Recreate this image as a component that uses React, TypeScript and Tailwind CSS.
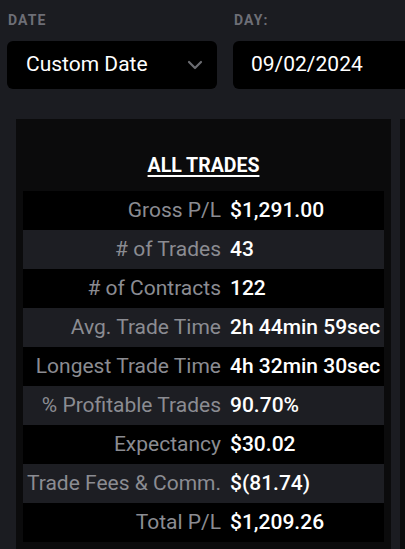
import React from "react";

const rows: [string, string][] = [
  ["Gross P/L", "$1,291.00"],
  ["# of Trades", "43"],
  ["# of Contracts", "122"],
  ["Avg. Trade Time", "2h 44min 59sec"],
  ["Longest Trade Time", "4h 32min 30sec"],
  ["% Profitable Trades", "90.70%"],
  ["Expectancy", "$30.02"],
  ["Trade Fees & Comm.", "$(81.74)"],
  ["Total P/L", "$1,209.26"],
];

export default function App() {
  return (
    <div
      className="w-[405px] h-[549px] overflow-hidden bg-[#1b1c21]"
      style={{ fontFamily: "Roboto, 'Liberation Sans', sans-serif" }}
    >
      <div className="flex gap-[16px] pl-[7px] pt-[12px]">
        <div className="w-[210px] shrink-0">
          <div className="pl-[1px] h-[17px] text-[14px] leading-[17px] font-bold tracking-[0.08em] text-[#6d6e76]">
            DATE
          </div>
          <div className="mt-[12px] h-[48px] bg-black rounded-[6px] flex items-center justify-between pl-[19px] pr-[14px]">
            <span className="text-[21px] text-white">Custom Date</span>
            <svg width="16" height="10" viewBox="0 0 16 10" fill="none">
              <path d="M2 2 L8 8 L14 2" stroke="#6b6c71" strokeWidth="2.2" strokeLinecap="round" strokeLinejoin="round" />
            </svg>
          </div>
        </div>
        <div className="w-[200px] shrink-0">
          <div className="pl-[1px] h-[17px] text-[14px] leading-[17px] font-bold tracking-[0.08em] text-[#6d6e76]">
            DAY:
          </div>
          <div className="mt-[12px] h-[48px] bg-black rounded-[6px] flex items-center pl-[18px]">
            <span className="text-[21px] text-white">09/02/2024</span>
          </div>
        </div>
      </div>

      <div className="flex gap-[9px] mt-[30px] pl-[16px]">
        <div className="w-[375px] shrink-0 h-[460px] bg-[#0b0b0c] px-[7px] pt-[34px]">
          <div className="text-center text-[19.5px] leading-[26px] font-bold text-white underline underline-offset-[3px] decoration-[1.5px]">
            ALL TRADES
          </div>
          <div className="mt-[12px]">
            {rows.map(([label, value], i) => (
              <div
                key={label}
                className={
                  "grid grid-cols-[198px_1fr] gap-[9px] h-[39px] items-center " +
                  (i % 2 === 0 ? "bg-black" : "bg-[#1d1e23]")
                }
              >
                <div className="text-right text-[21px] text-[#8b8c92] whitespace-nowrap">{label}</div>
                <div className="text-[21px] font-medium text-white whitespace-nowrap">{value}</div>
              </div>
            ))}
          </div>
        </div>
        <div className="w-[100px] shrink-0 h-[460px] bg-[#0b0b0c]" />
      </div>
    </div>
  );
}
